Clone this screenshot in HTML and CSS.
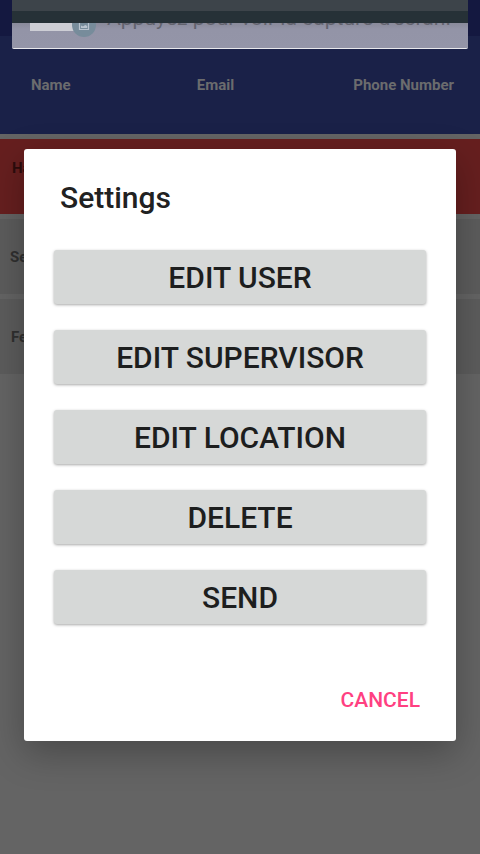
FILE: index.html
```html
<!DOCTYPE html>
<html lang="en">
<head>
<meta charset="utf-8">
<title>Settings</title>
<link rel="stylesheet" href="styles.css">
</head>
<body>
<div class="screen">
  <div class="status"></div>
  <div class="header"><span>Name</span><span class="email">Email</span><span>Phone Number</span></div>
  <div class="row alert">Ha</div>
  <div class="row second">Se</div>
  <div class="row third">Fe</div>

  <div class="dialog">
    <h1>Settings</h1>
    <div class="actions">
      <button>EDIT USER</button>
      <button>EDIT SUPERVISOR</button>
      <button>EDIT LOCATION</button>
      <button>DELETE</button>
      <button>SEND</button>
    </div>
    <button class="cancel">CANCEL</button>
  </div>

  <div class="notice">
    <div class="band"></div>
    <div class="dark"></div>
    <div class="body">
      <div class="thumb"></div>
      <svg class="badge" width="24" height="24" viewBox="0 0 24 24"><circle cx="12" cy="12" r="12" fill="#778c9b"/><path d="M7.5 7.5h9v9h-9z" fill="none" stroke="#b9c4cf" stroke-width="1.2"/><path d="M9 15v-2.6l2 1.2 2.2-1.6 2 1V15z" fill="#b9c4cf"/></svg>
      <p>Appuyez pour voir la capture d'écran.</p>
    </div>
  </div>
</div>
</body>
</html>
```

FILE: styles.css
```css
* { box-sizing: border-box; }
body { margin: 0; font-family: Roboto, sans-serif; }
.screen {
  position: relative;
  width: 480px;
  height: 854px;
  overflow: hidden;
  background: #646464;
}
.status { height: 36px; background: #141840; }
.header {
  display: flex;
  justify-content: space-between;
  height: 98px;
  padding: 39px 26px 0 31px;
  background: #1a2148;
  color: #6b6c6e;
  font-size: 15px;
  font-weight: 700;
  line-height: 20px;
}
.email { margin-left: 7px; }
.row {
  height: 75px;
  margin-top: 5px;
  padding: 28px 0 0 10px;
  background: #5c5c5c;
  color: #303030;
  font-size: 15px;
  font-weight: 700;
  line-height: 20px;
}
.alert { padding: 19px 0 0 12px; background: #661f1f; color: #2c0c0c; }
.third { padding-left: 11px; }
.dialog {
  position: absolute;
  left: 24px;
  top: 149px;
  width: 432px;
  height: 592px;
  display: flex;
  flex-direction: column;
  padding: 28px 30px 20px;
  border-radius: 3px;
  background: #fff;
  box-shadow: 0 12px 36px rgba(0, 0, 0, .28);
}
h1 {
  margin: 0 0 32px 6px;
  color: #212121;
  font-size: 30px;
  font-weight: 500;
  line-height: 41px;
}
.actions { display: flex; flex-direction: column; gap: 26px; }
button { border: 0; padding: 0; font-family: inherit; font-weight: 500; }
.actions button {
  height: 54px;
  padding-top: 2px;
  border-radius: 3px;
  background: #d6d8d7;
  color: #1d1e1e;
  font-size: 30px;
  line-height: 52px;
  box-shadow: 0 1px 3px rgba(0, 0, 0, .35);
}
.cancel {
  align-self: flex-end;
  margin: auto 6px 6px 0;
  background: none;
  color: #ff4081;
  font-size: 21px;
  line-height: 30px;
}
.notice {
  position: absolute;
  left: 12px;
  top: 0;
  width: 456px;
  height: 49px;
  border-bottom: 1px solid #e8e8ec;
  border-radius: 0 0 2px 2px;
  overflow: hidden;
  background: #9495a8;
}
.band { height: 11px; background: #3d444a; }
.dark { height: 12px; background: #263137; }
.body {
  position: relative;
  height: 25px;
  overflow: hidden;
  background: linear-gradient(#898a9a, #9394a7 6px, #9495a8);
}
.thumb { width: 54px; height: 8px; margin-left: 18px; background: #cdced5; }
.badge { position: absolute; left: 60px; top: -10px; }
.body p {
  position: absolute;
  left: 95px;
  top: -18px;
  margin: 0;
  color: #62636e;
  font-size: 21.1px;
  line-height: 26px;
  white-space: nowrap;
}
```
